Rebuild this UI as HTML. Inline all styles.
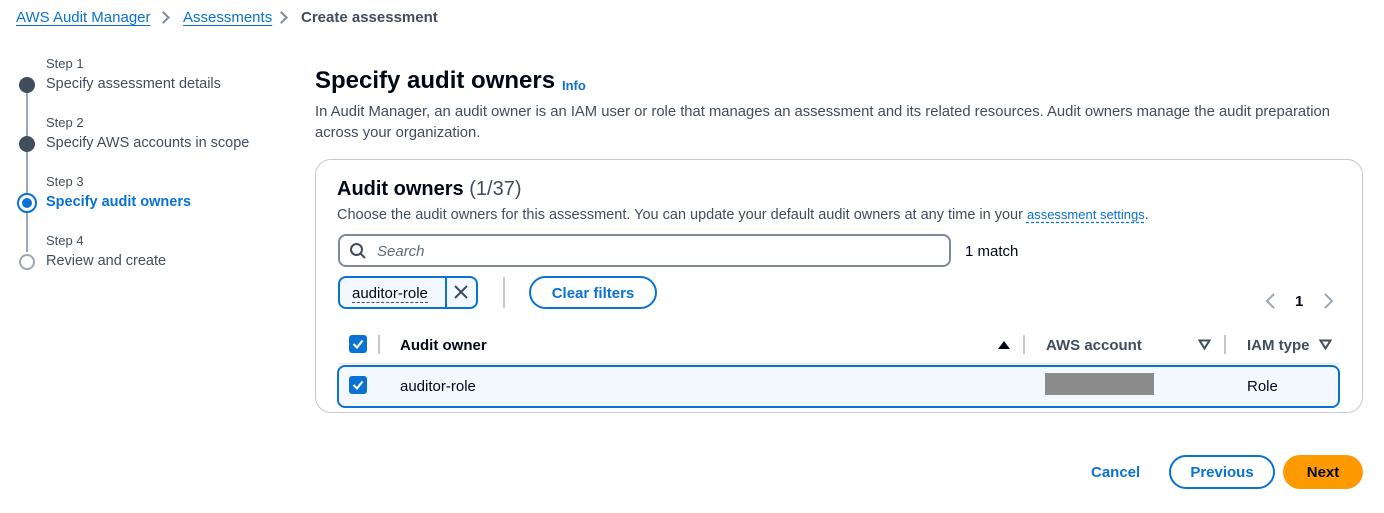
<!DOCTYPE html>
<html><head><meta charset="utf-8"><style>
*{box-sizing:border-box;margin:0;padding:0}
body{width:1384px;height:513px;background:#fff;font-family:"Liberation Sans",sans-serif;color:#000716;position:relative;overflow:hidden;font-size:15px}
.a{position:absolute;white-space:nowrap}
.link{color:#0972d3;text-decoration:underline;text-underline-offset:3px}
.grey{color:#414d5c}
.chev{position:absolute;width:9px;height:9px;border-right:2px solid #7d8998;border-top:2px solid #7d8998;transform:rotate(45deg)}
.dot{position:absolute;width:16px;height:16px;border-radius:50%}
.btn{position:absolute;border-radius:20px;font-weight:bold;font-size:15px;text-align:center}
.cb{position:absolute;width:18px;height:18px;background:#0972d3;border-radius:3px}
.cb svg{position:absolute;left:2px;top:2px}
</style></head><body>
<div class="a link" style="left:16px;top:9px;font-size:15px">AWS Audit Manager</div>
<div class="chev" style="left:159px;top:13px"></div>
<div class="a link" style="left:183px;top:9px;font-size:15px">Assessments</div>
<div class="chev" style="left:277px;top:13px"></div>
<div class="a grey" style="left:301px;top:9px;font-weight:bold;font-size:15px">Create assessment</div>

<div class="a" style="left:26px;top:92px;width:2px;height:160px;background:#9ba7b6;left:26px"></div>
<div class="a grey" style="left:46px;top:56px;font-size:13px">Step 1</div>
<div class="dot" style="left:19px;top:77px;background:#414d5c"></div>
<div class="a grey" style="left:46px;top:76px;font-size:14.5px">Specify assessment details</div>
<div class="a grey" style="left:46px;top:115px;font-size:13px">Step 2</div>
<div class="dot" style="left:19px;top:136px;background:#414d5c"></div>
<div class="a grey" style="left:46px;top:135px;font-size:14.5px">Specify AWS accounts in scope</div>
<div class="a grey" style="left:46px;top:174px;font-size:13px">Step 3</div>
<div class="dot" style="left:17px;top:193px;width:20px;height:20px;background:#fff;border:2.5px solid #0972d3"></div>
<div class="dot" style="left:22px;top:198px;width:10px;height:10px;background:#0972d3"></div>
<div class="a" style="left:46px;top:194px;color:#0972d3;font-weight:bold;font-size:14.5px">Specify audit owners</div>
<div class="a grey" style="left:46px;top:233px;font-size:13px">Step 4</div>
<div class="dot" style="left:19px;top:254px;background:#fff;border:2px solid #9ba7b6"></div>
<div class="a grey" style="left:46px;top:253px;font-size:14.5px">Review and create</div>

<div class="a" style="left:315px;top:67px;font-size:24px;font-weight:bold">Specify audit owners</div>
<div class="a" style="left:562px;top:78px;font-size:13px;font-weight:bold;color:#0972d3">Info</div>
<div class="a grey" style="left:315px;top:102px;line-height:21px;white-space:normal;width:1045px;font-size:14.8px">In Audit Manager, an audit owner is an IAM user or role that manages an assessment and its related resources. Audit owners manage the audit preparation across your organization.</div>

<div class="a" style="left:315px;top:159px;width:1048px;height:254px;border:1px solid #c6c6cd;border-radius:16px"></div>
<div class="a" style="left:337px;top:178px;font-size:20px;font-weight:bold">Audit owners <span style="font-weight:normal;color:#414d5c">(1/37)</span></div>
<div class="a grey" style="left:337px;top:207px;font-size:14.5px">Choose the audit owners for this assessment. You can update your default audit owners at any time in your <span class="link" style="font-size:13px;text-decoration-style:dashed">assessment settings</span>.</div>

<div class="a" style="left:338px;top:234px;width:613px;height:33px;border:2px solid #7d8998;border-radius:8px"></div>
<svg class="a" style="left:349px;top:242px" width="18" height="18" viewBox="0 0 18 18"><circle cx="7.5" cy="7.5" r="5.5" fill="none" stroke="#414d5c" stroke-width="2"/><line x1="11.5" y1="11.5" x2="16" y2="16" stroke="#414d5c" stroke-width="2"/></svg>
<div class="a" style="left:377px;top:243px;font-style:italic;color:#5f6b7a">Search</div>
<div class="a" style="left:965px;top:243px">1 match</div>

<div class="a" style="left:338px;top:276px;width:140px;height:33px;border:2px solid #0972d3;border-radius:8px;background:#f2f8fd"></div>
<div class="a" style="left:445px;top:277px;width:2px;height:31px;background:#0972d3"></div>
<div class="a" style="left:352px;top:285px;border-bottom:1px dashed #414d5c;line-height:17px">auditor-role</div>
<svg class="a" style="left:453px;top:284px" width="16" height="16"><path d="M2 2L14 14M14 2L2 14" stroke="#414d5c" stroke-width="2"/></svg>
<div class="a" style="left:503px;top:277px;width:2px;height:31px;background:#c6c6cd"></div>
<div class="btn" style="left:529px;top:276px;width:128px;height:33px;border:2px solid #0972d3;color:#0972d3;line-height:31px">Clear filters</div>

<svg class="a" style="left:1264px;top:292px" width="12" height="18"><path d="M10 2L3 9L10 16" fill="none" stroke="#9ba7b6" stroke-width="2"/></svg>
<div class="a" style="left:1295px;top:293px;font-weight:bold">1</div>
<svg class="a" style="left:1323px;top:292px" width="12" height="18"><path d="M2 2L9 9L2 16" fill="none" stroke="#9ba7b6" stroke-width="2"/></svg>

<div class="cb" style="left:349px;top:335px"><svg width="14" height="14"><path d="M2.5 7L6 10.5L11.5 3.5" fill="none" stroke="#fff" stroke-width="2.2"/></svg></div>
<div class="a" style="left:378px;top:335px;width:2px;height:19px;background:#c6c6cd"></div>
<div class="a" style="left:400px;top:337px;font-weight:bold">Audit owner</div>
<svg class="a" style="left:998px;top:340px" width="12" height="10"><path d="M0 9L6 1L12 9Z" fill="#000716"/></svg>
<div class="a" style="left:1023px;top:335px;width:2px;height:19px;background:#c6c6cd"></div>
<div class="a grey" style="left:1046px;top:337px;font-weight:bold">AWS account</div>
<svg class="a" style="left:1198px;top:339px" width="13" height="11"><path d="M1.5 1.5H11.5L6.5 9.5Z" fill="none" stroke="#414d5c" stroke-width="2"/></svg>
<div class="a" style="left:1224px;top:335px;width:2px;height:19px;background:#c6c6cd"></div>
<div class="a grey" style="left:1247px;top:337px;font-weight:bold">IAM type</div>
<svg class="a" style="left:1319px;top:339px" width="13" height="11"><path d="M1.5 1.5H11.5L6.5 9.5Z" fill="none" stroke="#414d5c" stroke-width="2"/></svg>
<div class="a" style="left:338px;top:363px;width:1002px;height:1px;background:#e9ebed"></div>

<div class="a" style="left:337px;top:365px;width:1003px;height:43px;border:2px solid #0972d3;border-radius:8px;background:#f2f8fd"></div>
<div class="cb" style="left:349px;top:376px"><svg width="14" height="14"><path d="M2.5 7L6 10.5L11.5 3.5" fill="none" stroke="#fff" stroke-width="2.2"/></svg></div>
<div class="a" style="left:400px;top:378px">auditor-role</div>
<div class="a" style="left:1045px;top:373px;width:109px;height:22px;background:#8c8c8c"></div>
<div class="a" style="left:1247px;top:378px">Role</div>

<div class="a" style="left:1091px;top:464px;font-weight:bold;color:#0972d3">Cancel</div>
<div class="btn" style="left:1169px;top:455px;width:106px;height:34px;border:2px solid #0972d3;color:#0972d3;line-height:32px">Previous</div>
<div class="btn" style="left:1283px;top:455px;width:80px;height:34px;background:#ff9900;color:#000716;line-height:35px">Next</div>
</body></html>
